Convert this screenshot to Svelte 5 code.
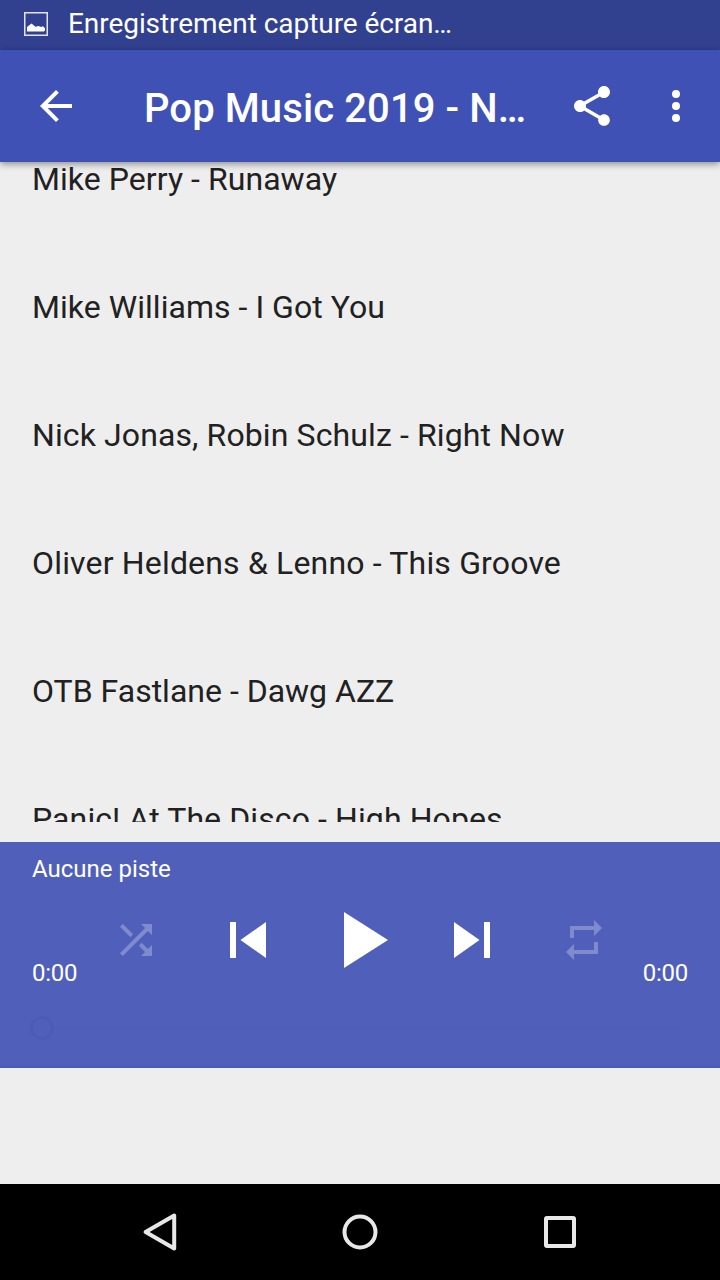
<script>
  const tracks = [
    { name: 'Mike Perry - Runaway', tracking: 0.05 },
    { name: 'Mike Williams - I Got You', tracking: 0.04 },
    { name: 'Nick Jonas, Robin Schulz - Right Now', tracking: 0.11 },
    { name: 'Oliver Heldens & Lenno - This Groove', tracking: 0.17 },
    { name: 'OTB Fastlane - Dawg AZZ', tracking: 0 },
    { name: 'Panic! At The Disco - High Hopes', tracking: 0.1 },
  ];
</script>

<div class="screen">
  <div class="status">
    <svg width="24" height="24" viewBox="0 0 24 24">
      <rect x="0.75" y="0.75" width="22.5" height="22.5" fill="none" stroke="#dfe3f4" stroke-width="1.5" />
      <path d="M3 19.500v-4.500l4.500-3.500 4 3.300 3-.8 2.500 1 2-.7 2 2v2l-1 1.200z" fill="#fff" />
    </svg>
    <span>Enregistrement capture écran…</span>
  </div>

  <header>
    <svg class="s48" viewBox="0 0 24 24"><path d="M20 11H7.830l5.590-5.590L12 4l-8 8 8 8 1.410-1.410L7.830 13H20z" /></svg>
    <h1>Pop Music 2019 - N…</h1>
    <svg class="s48 share" viewBox="0 0 24 24"><path d="M18 16.080c-.76 0-1.440.3-1.960.77L8.910 12.700c.05-.23.09-.46.09-.7s-.04-.47-.09-.7l7.050-4.110c.54.5 1.250.81 2.040.81 1.660 0 3-1.340 3-3s-1.340-3-3-3-3 1.340-3 3c0 .24.04.47.09.7L8.040 9.810C7.500 9.310 6.790 9 6 9c-1.660 0-3 1.340-3 3s1.340 3 3 3c.79 0 1.500-.31 2.040-.81l7.120 4.160c-.05.21-.08.43-.08.65 0 1.610 1.310 2.920 2.920 2.920s2.920-1.310 2.920-2.920-1.310-2.920-2.920-2.920z" /></svg>
    <svg class="s48" viewBox="0 0 24 24"><circle cx="12" cy="6" r="2" /><circle cx="12" cy="12" r="2" /><circle cx="12" cy="18" r="2" /></svg>
  </header>

  <main>
    {#each tracks as track}
      <div class="track" style="letter-spacing: {track.tracking}px">{track.name}</div>
    {/each}
  </main>

  <section class="player">
    <div class="title">Aucune piste</div>
    <div class="controls">
      <span class="time">0:00</span>
      <svg class="s48 dim" viewBox="0 0 24 24"><path d="M10.590 9.170L5.410 4 4 5.410l5.170 5.170zM14.500 4l2.040 2.040L4 18.590 5.410 20 17.960 7.460 20 9.500V4zm.33 9.410l-1.410 1.410 3.130 3.130L14.500 20H20v-5.500l-2.040 2.040z" /></svg>
      <svg class="s72 prev" viewBox="0 0 24 24"><path d="M6 6h2v12H6zm3.500 6l8.500 6V6z" /></svg>
      <svg class="s96" viewBox="0 0 24 24"><path d="M8 5v14l11-7z" /></svg>
      <svg class="s72 next" viewBox="0 0 24 24"><path d="M6 18l8.500-6L6 6zM16 6v12h2V6z" /></svg>
      <svg class="s48 dim" viewBox="0 0 24 24"><path d="M7 7h10v3l4-4-4-4v3H5v6h2zm10 10H7v-3l-4 4 4 4v-3h12v-6h-2z" /></svg>
      <span class="time end">0:00</span>
    </div>
    <div class="seek"><i></i><b></b></div>
  </section>

  <div class="spacer"></div>

  <nav>
    <svg width="40" height="40" viewBox="0 0 40 40"><path d="M34.200 3.600v32.800L5.600 20z" /></svg>
    <svg width="40" height="40" viewBox="0 0 40 40"><circle cx="20" cy="20" r="15.500" /></svg>
    <svg width="40" height="40" viewBox="0 0 40 40"><rect x="6" y="6" width="28" height="28" rx="1" /></svg>
  </nav>
</div>

<style>
  .screen {
    width: 720px;
    height: 1280px;
    display: flex;
    flex-direction: column;
    overflow: hidden;
    background: #eee;
    font-family: Roboto, sans-serif;
    color: #fff;
  }
  svg { display: block; flex: none; fill: #fff; }
  .s48 { width: 48px; height: 48px; }
  .s72 { width: 72px; height: 72px; }
  .s96 { width: 96px; height: 96px; }
  .status {
    height: 50px;
    box-sizing: border-box;
    flex: none;
    display: flex;
    align-items: center;
    gap: 20px;
    padding: 0 24px 2px;
    background: #324090;
    font-size: 28px;
    line-height: 40px;
    letter-spacing: -0.06px;
    white-space: nowrap;
  }
  header {
    height: 112px;
    box-sizing: border-box;
    flex: none;
    display: flex;
    align-items: center;
    padding: 0 20px 0 32px;
    background: #3f51b5;
    box-shadow: 0 2px 7px rgba(0, 0, 0, 0.42);
    z-index: 1;
  }
  h1 {
    flex: 1;
    margin: 6px 0 0 64px;
    font-size: 40px;
    line-height: 48px;
    font-weight: 500;
    letter-spacing: 0.1px;
    white-space: nowrap;
  }
  .share { margin-right: 36px; }
  main {
    height: 660px;
    flex: none;
    overflow: hidden;
    margin-bottom: 20px;
  }
  .track {
    height: 128px;
    padding-left: 32px;
    font-size: 32px;
    line-height: 34px;
    color: #212121;
    white-space: nowrap;
  }
  .player {
    height: 226px;
    box-sizing: border-box;
    flex: none;
    padding: 12px 32px 0;
    background: #5060ba;
    border-bottom: 2px solid #4a5ab5;
  }
  .title { font-size: 24px; line-height: 30px; height: 38px; }
  .controls {
    display: grid;
    grid-template-columns: 80px 48px 152px 96px 152px 48px 80px;
    align-items: center;
    justify-items: center;
    height: 96px;
  }
  .prev { justify-self: end; margin-right: 28px; }
  .next { justify-self: start; margin-left: 28px; }
  .time { align-self: end; justify-self: start; font-size: 24px; line-height: 30px; letter-spacing: -0.25px; }
  .end { justify-self: end; }
  .dim { opacity: 0.27; }
  .seek { display: flex; align-items: center; height: 72px; padding-top: 8px; box-sizing: border-box; }
  .seek i { width: 18px; height: 18px; border: 3px solid #4b5bb6; border-radius: 50%; margin-left: -2px; }
  .seek b { flex: 1; height: 2px; margin: 0 8px 0 2px; background: #4e5eb8; }
  .spacer { flex: 1; }
  nav {
    height: 96px;
    flex: none;
    display: flex;
    justify-content: center;
    align-items: center;
    gap: 160px;
    background: #000;
  }
  nav svg { fill: none; stroke: #e8e8e8; stroke-width: 4; stroke-linejoin: round; }
</style>
